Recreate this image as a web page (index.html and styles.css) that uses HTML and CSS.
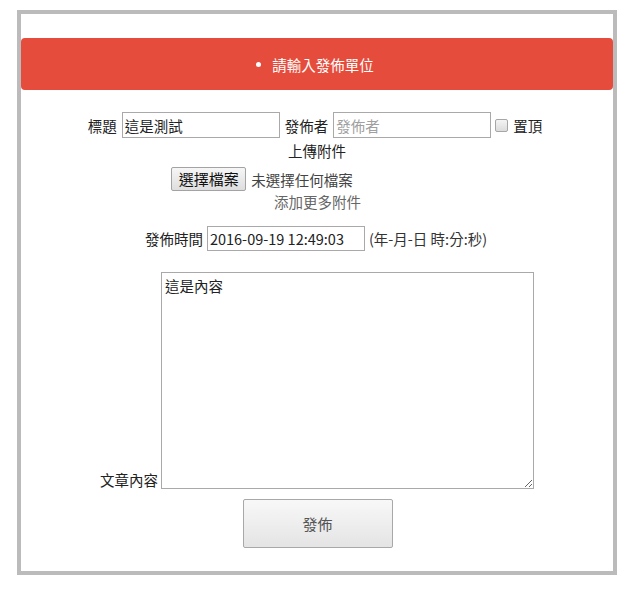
FILE: index.html
```html
<!DOCTYPE html>
<html lang="zh-Hant">
<head>
<meta charset="utf-8">
<title>發佈文章</title>
<link rel="stylesheet" href="styles.css">
</head>
<body>
<div class="box">
  <div class="alert"><span class="bullet"></span><span>請輸入發佈單位</span></div>
  <div class="row row-title">
    <span class="label">標題</span>
    <input class="field" type="text" value="這是測試">
    <span class="label">發佈者</span>
    <input class="field" type="text" placeholder="發佈者">
    <input class="check" type="checkbox">
    <span class="label">置頂</span>
  </div>
  <div class="row row-upload">上傳附件</div>
  <div class="row row-file">
    <span class="file-btn">選擇檔案</span>
    <span class="file-name">未選擇任何檔案</span>
  </div>
  <div class="row row-more">添加更多附件</div>
  <div class="row row-time">
    <span class="label">發佈時間</span>
    <input class="field field-time" type="text" value="2016-09-19 12:49:03">
    <span class="hint">(年-月-日 時:分:秒)</span>
  </div>
  <div class="row row-content">
    <span class="label">文章內容</span>
    <textarea class="content">這是內容</textarea>
  </div>
  <div class="row row-submit">
    <button class="submit" type="button">發佈</button>
  </div>
</div>
</body>
</html>
```
FILE: styles.css
```css
html, body {
  margin: 0;
  padding: 0;
  background: #fff;
}
body {
  font-family: "Noto Sans CJK TC", "Noto Sans", sans-serif;
  font-size: 14.5px;
  color: #222;
}
.box {
  margin: 10px 0 0 17px;
  width: 592px;
  border: 4px solid #bbbbbb;
  padding: 24px 0 23px;
}
.alert {
  height: 52px;
  background: #e64c3c;
  border-radius: 4px;
  color: #fff;
  display: flex;
  align-items: center;
  justify-content: center;
  gap: 11px;
  font-size: 14.5px;
}
.bullet {
  width: 5px;
  height: 5px;
  border-radius: 50%;
  background: #fff;
  margin-left: -4px;
}
.row {
  display: flex;
  justify-content: center;
  align-items: center;
}
.row-title {
  margin-top: 22px;
  height: 26px;
  gap: 5px;
  padding-right: 4px;
}
.label {
  white-space: nowrap;
}
.field {
  box-sizing: border-box;
  width: 158px;
  height: 26px;
  border: 1px solid #a9a9a9;
  padding: 0 2px;
  font-family: inherit;
  font-size: 14.5px;
  color: #222;
  outline: none;
  background: #fff;
}
.field::placeholder {
  color: #a0a0a0;
}
.check {
  appearance: none;
  -webkit-appearance: none;
  box-sizing: border-box;
  width: 13px;
  height: 13px;
  margin: 0 0 0 -1px;
  border: 1px solid #a6a6a6;
  border-radius: 2px;
  background: linear-gradient(#f4f4f4, #dcdcdc);
}
.row-upload {
  margin-top: 2px;
  height: 22px;
  line-height: 22px;
}
.row-file {
  margin-top: 5px;
  height: 24px;
  gap: 5px;
  padding-right: 110px;
}
.file-btn {
  box-sizing: border-box;
  height: 24px;
  width: 75px;
  line-height: 22px;
  text-align: center;
  border: 1px solid #a3a3a3;
  border-radius: 2px;
  background: linear-gradient(#f6f6f6, #dedede);
  color: #111;
  font-size: 15px;
}
.file-name {
  color: #444;
}
.row-more {
  margin-top: 1px;
  height: 20px;
  line-height: 20px;
  color: #666;
  padding-left: 1px;
}
.row-time {
  margin-top: 14px;
  height: 25px;
  gap: 4px;
  padding-right: 2px;
}
.field-time {
  height: 25px;
}
.hint {
  color: #333;
}
.row-content {
  margin-top: 21px;
  align-items: flex-end;
  gap: 3px;
}
.row-content .label {
  line-height: 18px;
}
.content {
  box-sizing: border-box;
  width: 373px;
  height: 217px;
  border: 1px solid #a9a9a9;
  padding: 2px 3px;
  font-family: inherit;
  font-size: 14.5px;
  color: #222;
  margin: 0;
  outline: none;
}
.row-submit {
  margin-top: 10px;
}
.submit {
  box-sizing: border-box;
  width: 150px;
  height: 49px;
  border: 1px solid #a8a8a8;
  border-radius: 2px;
  background: linear-gradient(#f8f8f8, #e4e4e4);
  color: #555;
  font-family: inherit;
  font-size: 15px;
  padding: 0;
  margin-left: 1px;
}
```
